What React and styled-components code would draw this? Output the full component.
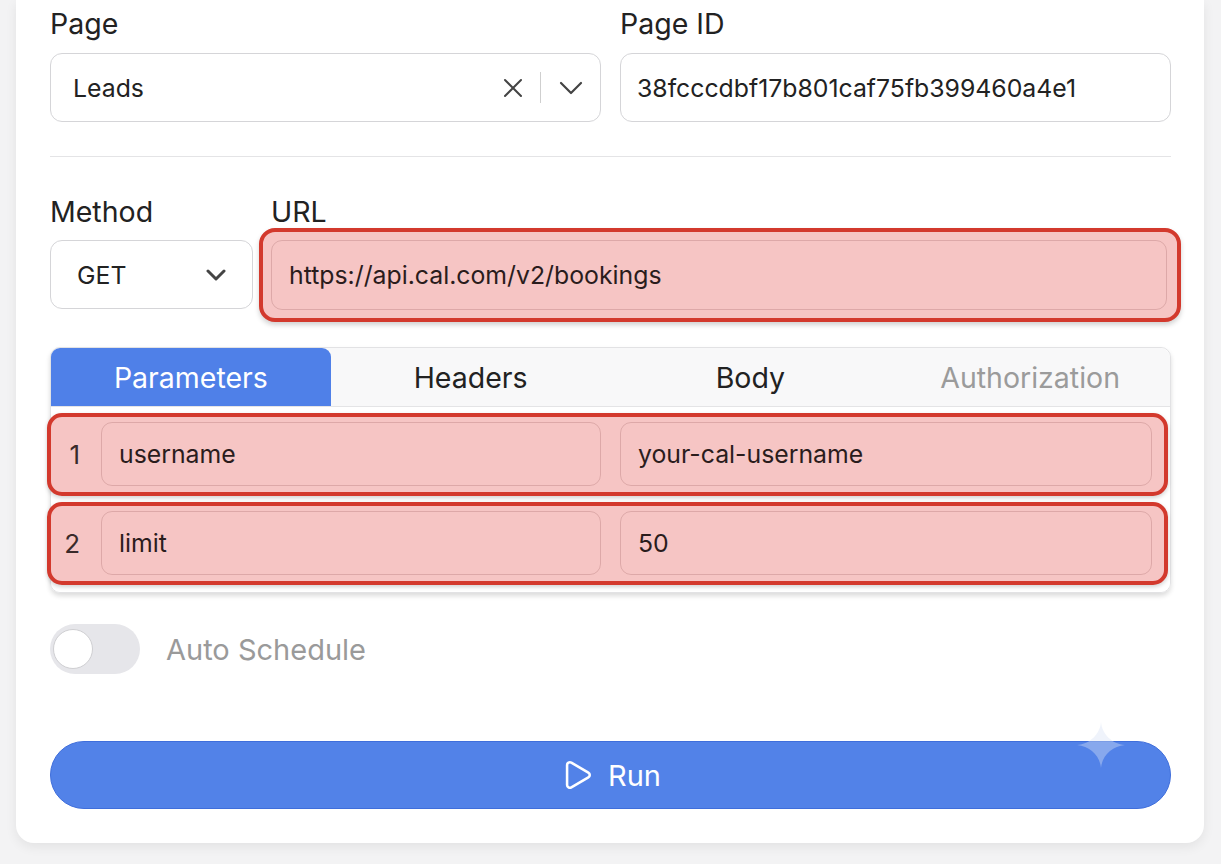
import React from "react";
import styled, { createGlobalStyle } from "styled-components";
import { Play } from "lucide-react";

const GlobalStyle = createGlobalStyle`
  body {
    margin: 0;
    background: #f3f3f4;
    font-family: Inter, "Noto Sans", sans-serif;
    color: #1f1f1f;
  }
`;

const Page = styled.div`
  padding: 0 17px 22px 16px;
`;

const Card = styled.div`
  background: #fff;
  border-radius: 0 0 18px 18px;
  box-shadow: 0 4px 12px rgba(0, 0, 0, 0.07);
  padding: 8px 33px 34px 34px;
`;

const FieldGrid = styled.div`
  display: grid;
  grid-template-columns: ${(p) => p.$cols};
  column-gap: ${(p) => p.$gap}px;
`;

const Field = styled.div`
  display: flex;
  flex-direction: column;
  min-width: 0;
`;

const Label = styled.div`
  font-size: 28.5px;
  line-height: 32px;
  color: #222;
  margin-bottom: ${(p) => p.$gap || 13}px;
`;

const Box = styled.div`
  height: 69px;
  box-sizing: border-box;
  border: 1.5px solid #d5d5d8;
  border-radius: 12px;
  display: flex;
  align-items: center;
  padding: 0 ${(p) => p.$padRight ?? 16}px 0 ${(p) => p.$padLeft ?? 16}px;
  font-size: 24.8px;
  color: #222;
  background: #fff;
`;

const BoxText = styled.span`
  flex: 1;
  white-space: nowrap;
  overflow: hidden;
`;

const IconSlot = styled.span`
  display: flex;
  align-items: center;
  color: #444;
`;

const Sep = styled.span`
  width: 1.5px;
  height: 31px;
  background: #cfcfcf;
  margin: 0 18px 0 17px;
`;

const Divider = styled.div`
  height: 1px;
  background: #e4e4e6;
  margin: 34px 0 39px;
`;

const UrlRing = styled.div`
  margin: -12px -10px -12px -12px;
  border: 4px solid #d3392d;
  border-radius: 16px;
  background: #f6c5c4;
  padding: 8px 10px 8px 8px;
  box-shadow: 0 3px 5px rgba(0, 0, 0, 0.18);
`;

const RingInput = styled.div`
  height: ${(p) => p.$h || 64}px;
  box-sizing: border-box;
  border: 1.5px solid rgba(130, 70, 70, 0.22);
  border-radius: 11px;
  display: flex;
  align-items: center;
  padding: 0 17px;
  font-size: 24.8px;
  color: #2a1c1c;
  white-space: nowrap;
`;

const TabsPanel = styled.div`
  margin-top: 37px;
  border: 1px solid #e2e2e4;
  border-radius: 10px;
  box-shadow: 0 3px 5px rgba(0, 0, 0, 0.14);
`;

const TabBar = styled.div`
  display: grid;
  grid-template-columns: repeat(4, 1fr);
  height: 58px;
  background: #f8f8f9;
  border-bottom: 1px solid #e4e4e6;
  border-radius: 10px 10px 0 0;
`;

const Tab = styled.div`
  display: flex;
  align-items: center;
  justify-content: center;
  font-size: 28.5px;
  color: ${(p) => (p.$active ? "#fff" : p.$muted ? "#9b9b9b" : "#222")};
  background: ${(p) => (p.$active ? "#4f80e8" : "transparent")};
  border-radius: ${(p) => (p.$active ? "9px 9px 0 0" : "0")};
`;

const TabBody = styled.div`
  display: flex;
  flex-direction: column;
  gap: 6px;
  padding: 6px 2px 7px 0;
  background: #fff;
  border-radius: 0 0 10px 10px;
`;

const ParamRow = styled.div`
  display: grid;
  grid-template-columns: 31px 500px 1fr;
  column-gap: 19px;
  align-items: center;
  margin-left: -4px;
  border: 4px solid #d3392d;
  border-radius: 15px;
  background: #f6c5c4;
  padding: 5px 12px 6px 0;
  box-shadow: 0 2px 4px rgba(0, 0, 0, 0.18);
`;

const RowNum = styled.div`
  font-size: 26px;
  color: #3a2a2a;
  text-align: right;
  padding-right: 2px;
`;

const ToggleRow = styled.div`
  margin-top: 31px;
  display: flex;
  align-items: center;
  gap: 26px;
`;

const Track = styled.div`
  width: 90px;
  height: 50px;
  border-radius: 25px;
  background: #e6e6ea;
  display: flex;
  align-items: center;
  padding-left: 3px;
  box-sizing: border-box;
`;

const Knob = styled.div`
  width: 40px;
  height: 40px;
  border-radius: 50%;
  background: #fff;
  border: 1.5px solid #cfcfd2;
  box-sizing: border-box;
`;

const ToggleLabel = styled.span`
  font-size: 29px;
  color: #9a9a9a;
`;

const RunButton = styled.button`
  position: relative;
  margin-top: 67px;
  width: 100%;
  height: 68px;
  border-radius: 34px;
  border: 1px solid #3f6edb;
  background: #5282e8;
  color: #fff;
  font-family: inherit;
  font-size: 29px;
  display: flex;
  align-items: center;
  justify-content: center;
  gap: 14px;
  cursor: pointer;
`;

const Sparkle = styled.svg`
  position: absolute;
  top: -20px;
  right: 45px;
  width: 48px;
  height: 46px;
`;

const ChevronIcon = ({ w = 24, h = 14, stroke = 2.2 }) => (
  <svg width={w} height={h} viewBox={`0 0 ${w} ${h}`} fill="none">
    <path
      d={`M2 2 L${w / 2} ${h - 2} L${w - 2} 2`}
      stroke="currentColor"
      strokeWidth={stroke}
      strokeLinecap="round"
      strokeLinejoin="round"
    />
  </svg>
);

const ClearIcon = () => (
  <svg width="20" height="20" viewBox="0 0 20 20" fill="none">
    <path
      d="M2 2 L18 18 M18 2 L2 18"
      stroke="currentColor"
      strokeWidth="2"
      strokeLinecap="round"
    />
  </svg>
);

const params = [
  { key: "username", value: "your-cal-username" },
  { key: "limit", value: "50" },
];

const tabs = ["Parameters", "Headers", "Body", "Authorization"];

export default function App() {
  return (
    <Page>
      <GlobalStyle />
      <Card>
        <FieldGrid $cols="1fr 1fr" $gap={19}>
          <Field>
            <Label>Page</Label>
            <Box $padLeft={22} $padRight={17}>
              <BoxText>Leads</BoxText>
              <IconSlot>
                <ClearIcon />
              </IconSlot>
              <Sep />
              <IconSlot>
                <ChevronIcon />
              </IconSlot>
            </Box>
          </Field>
          <Field>
            <Label>Page ID</Label>
            <Box>
              <BoxText>38fcccdbf17b801caf75fb399460a4e1</BoxText>
            </Box>
          </Field>
        </FieldGrid>

        <Divider />

        <FieldGrid $cols="203px 1fr" $gap={18}>
          <Field>
            <Label $gap={12}>Method</Label>
            <Box $padLeft={26} $padRight={26}>
              <BoxText>GET</BoxText>
              <IconSlot>
                <ChevronIcon w={20} h={12} stroke={3} />
              </IconSlot>
            </Box>
          </Field>
          <Field>
            <Label $gap={12}>URL</Label>
            <UrlRing>
              <RingInput $h={70}>https://api.cal.com/v2/bookings</RingInput>
            </UrlRing>
          </Field>
        </FieldGrid>

        <TabsPanel>
          <TabBar>
            {tabs.map((t, i) => (
              <Tab key={t} $active={i === 0} $muted={i === 3}>
                {t}
              </Tab>
            ))}
          </TabBar>
          <TabBody>
            {params.map((p, i) => (
              <ParamRow key={p.key}>
                <RowNum>{i + 1}</RowNum>
                <RingInput>{p.key}</RingInput>
                <RingInput>{p.value}</RingInput>
              </ParamRow>
            ))}
          </TabBody>
        </TabsPanel>

        <ToggleRow>
          <Track>
            <Knob />
          </Track>
          <ToggleLabel>Auto Schedule</ToggleLabel>
        </ToggleRow>

        <RunButton type="button">
          <Play size={34} strokeWidth={1.8} />
          Run
          <Sparkle viewBox="0 0 48 46">
            <path
              d="M24 0 C25 12 35 22 48 23 C35 24 25 34 24 46 C23 34 13 24 0 23 C13 22 23 12 24 0 Z"
              fill="rgba(215, 225, 245, 0.4)"
            />
          </Sparkle>
        </RunButton>
      </Card>
    </Page>
  );
}
